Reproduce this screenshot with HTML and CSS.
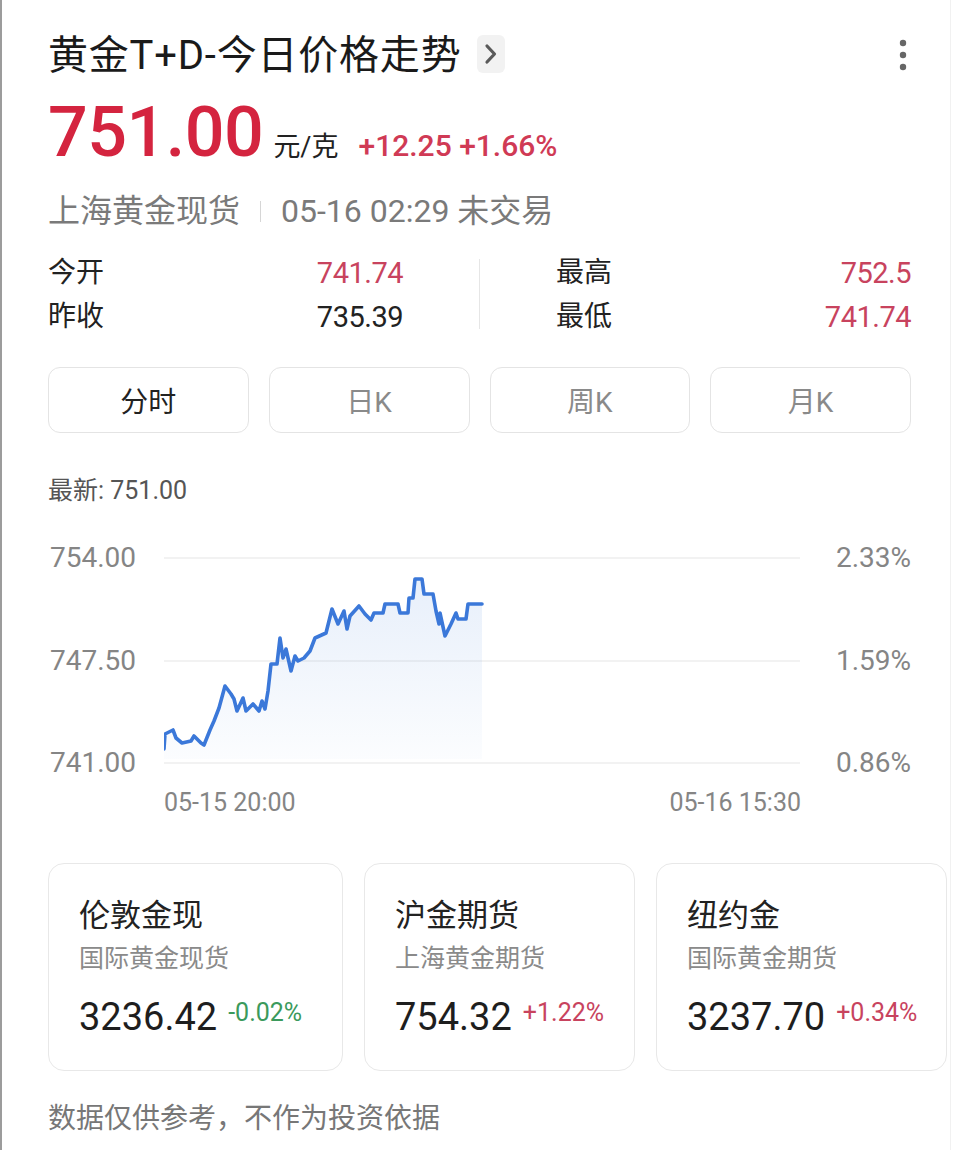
FILE: index.html
```html
<!DOCTYPE html>
<html lang="zh-CN">
<head>
<meta charset="utf-8">
<title>黄金T+D-今日价格走势</title>
<link rel="stylesheet" href="styles.css">
</head>
<body>
<div class="page">
  <header class="head">
    <div class="title-wrap">
      <h1 class="title">黄金T+D-今日价格走势</h1>
      <span class="title-arrow">
        <svg width="28" height="38" viewBox="0 0 28 38"><path d="M10 11 L17.5 19 L10 27" fill="none" stroke="#5a5a5a" stroke-width="3.2" stroke-linecap="round" stroke-linejoin="round"/></svg>
      </span>
    </div>
    <span class="more">
      <svg width="12" height="36" viewBox="0 0 12 36"><circle cx="6" cy="6" r="3.2" fill="#666"/><circle cx="6" cy="18" r="3.2" fill="#666"/><circle cx="6" cy="30" r="3.2" fill="#666"/></svg>
    </span>
  </header>

  <div class="price-row">
    <span class="price">751.00</span>
    <span class="unit">元/克</span>
    <span class="change">+12.25 +1.66%</span>
  </div>

  <div class="sub">
    <span>上海黄金现货</span>
    <span class="sub-sep"></span>
    <span>05-16 02:29 未交易</span>
  </div>

  <div class="stats">
    <div class="stat-col">
      <div class="stat-row"><span class="stat-label">今开</span><span class="stat-val red">741.74</span></div>
      <div class="stat-row"><span class="stat-label">昨收</span><span class="stat-val">735.39</span></div>
    </div>
    <div class="stat-divider"></div>
    <div class="stat-col">
      <div class="stat-row"><span class="stat-label">最高</span><span class="stat-val red">752.5</span></div>
      <div class="stat-row"><span class="stat-label">最低</span><span class="stat-val red">741.74</span></div>
    </div>
  </div>

  <div class="tabs">
    <div class="tab active">分时</div>
    <div class="tab">日K</div>
    <div class="tab">周K</div>
    <div class="tab">月K</div>
  </div>

  <div class="latest">最新: 751.00</div>

  <div class="chart">
    <div class="axis axis-left">
      <span>754.00</span><span>747.50</span><span>741.00</span>
    </div>
    <svg class="plot" width="636" height="235" viewBox="0 0 636 235">
      <defs>
        <linearGradient id="fillg" x1="0" y1="0" x2="0" y2="1">
          <stop offset="0" stop-color="#4a86dc" stop-opacity="0.13"/>
          <stop offset="1" stop-color="#4a86dc" stop-opacity="0.02"/>
        </linearGradient>
      </defs>
      <line x1="0" y1="15" x2="636" y2="15" stroke="#eeeeee" stroke-width="1.5"/>
      <line x1="0" y1="118" x2="636" y2="118" stroke="#eeeeee" stroke-width="1.5"/>
      <line x1="0" y1="220" x2="636" y2="220" stroke="#eeeeee" stroke-width="1.5"/>
      <polygon fill="url(#fillg)" points="0,206 1,191 9,187 12,195 18,200 27,198 30,193 37,200 40,202 46,187 50,178 55,165 61,143 67,151 70,156 73,168 79,155 82,168 89,161 95,168 98,158 101,166 104,148 107,121 113,121 116,95 119,115 122,106 127,128 131,113 134,118 140,115 146,108 151,95 162,90 168,66 174,81 180,68 183,86 186,73 195,63 201,71 207,77 210,70 219,70 221,61 234,61 236,70 244,70 245,55 249,55 251,36 258,36 260,51 269,51 272,68 275,81 276,70 281,93 287,81 292,70 294,76 302,76 304,61 315,61 318,61 318,216 0,216"/>
      <polyline fill="none" stroke="#3b78d9" stroke-width="3.6" stroke-linejoin="round" stroke-linecap="round" points="0,206 1,191 9,187 12,195 18,200 27,198 30,193 37,200 40,202 46,187 50,178 55,165 61,143 67,151 70,156 73,168 79,155 82,168 89,161 95,168 98,158 101,166 104,148 107,121 113,121 116,95 119,115 122,106 127,128 131,113 134,118 140,115 146,108 151,95 162,90 168,66 174,81 180,68 183,86 186,73 195,63 201,71 207,77 210,70 219,70 221,61 234,61 236,70 244,70 245,55 249,55 251,36 258,36 260,51 269,51 272,68 275,81 276,70 281,93 287,81 292,70 294,76 302,76 304,61 315,61 318,61"/>
    </svg>
    <div class="axis axis-right">
      <span>2.33%</span><span>1.59%</span><span>0.86%</span>
    </div>
  </div>

  <div class="xaxis">
    <span>05-15 20:00</span><span>05-16 15:30</span>
  </div>

  <div class="cards">
    <div class="card">
      <div class="card-title">伦敦金现</div>
      <div class="card-sub">国际黄金现货</div>
      <div class="card-price"><span class="card-num">3236.42</span><span class="card-chg green">-0.02%</span></div>
    </div>
    <div class="card">
      <div class="card-title">沪金期货</div>
      <div class="card-sub">上海黄金期货</div>
      <div class="card-price"><span class="card-num">754.32</span><span class="card-chg red">+1.22%</span></div>
    </div>
    <div class="card">
      <div class="card-title">纽约金</div>
      <div class="card-sub">国际黄金期货</div>
      <div class="card-price"><span class="card-num">3237.70</span><span class="card-chg red">+0.34%</span></div>
    </div>
  </div>

  <p class="note">数据仅供参考，不作为投资依据</p>
</div>
</body>
</html>
```

FILE: styles.css
```css
html, body {
  margin: 0;
  padding: 0;
  background: #ffffff;
}

body {
  font-family: "Roboto", "Noto Sans CJK SC", "Noto Sans", sans-serif;
  color: #222222;
}

.page {
  box-sizing: border-box;
  width: 951px;
  min-height: 1150px;
  padding: 36px 39px 0 46px;
  border-left: 2px solid #9c9c9c;
  border-right: 1px solid #f1f1f1;
}

.head {
  display: flex;
  align-items: center;
  justify-content: space-between;
  height: 40px;
}

.title-wrap {
  display: flex;
  align-items: center;
  gap: 16px;
}

.title {
  margin: 0;
  font-size: 40px;
  line-height: 40px;
  font-weight: 400;
  letter-spacing: 0.8px;
  color: #1a1a1a;
}

.title-arrow {
  display: flex;
  width: 28px;
  height: 38px;
  background: #f2f2f2;
  border-radius: 6px;
  margin-top: -4px;
}

.more {
  display: flex;
  margin-right: 2px;
  margin-top: -2px;
}

.price-row {
  display: flex;
  align-items: baseline;
  margin-top: 14px;
  line-height: 84px;
}

.price {
  font-size: 70px;
  font-weight: 500;
  color: #d4243f;
  letter-spacing: -0.5px;
}

.unit {
  font-size: 27px;
  color: #222222;
  margin-left: 10px;
}

.change {
  font-size: 30px;
  font-weight: 500;
  color: #d03a55;
  margin-left: 20px;
}

.sub {
  display: flex;
  align-items: center;
  margin-top: 2px;
  line-height: 40px;
  font-size: 32px;
  color: #7a7a7a;
}

.sub-sep {
  width: 1px;
  height: 21px;
  background: #d6d6d6;
  margin: 0 20px;
}

.stats {
  display: grid;
  grid-template-columns: 1fr 1px 1fr;
  column-gap: 76px;
  margin-top: 20px;
}

.stat-row {
  display: flex;
  justify-content: space-between;
  line-height: 44px;
}

.stat-label {
  font-size: 28px;
  color: #222222;
}

.stat-val {
  font-size: 29px;
  color: #222222;
  letter-spacing: -0.5px;
}

.stat-val.red {
  color: #c8435e;
}

.stat-divider {
  background: #e6e6e6;
  margin: 8px 0 10px;
}

.tabs {
  display: grid;
  grid-template-columns: repeat(4, 1fr);
  gap: 20px;
  margin-top: 28px;
}

.tab {
  box-sizing: border-box;
  height: 66px;
  border: 1px solid #e4e4e4;
  border-radius: 12px;
  display: flex;
  align-items: center;
  justify-content: center;
  font-size: 28px;
  color: #8a8a8a;
}

.tab.active {
  color: #222222;
}

.latest {
  margin-top: 44px;
  line-height: 28px;
  font-size: 25px;
  color: #555555;
}

.chart {
  display: flex;
  margin-top: 38px;
  height: 235px;
}

.axis {
  display: flex;
  flex-direction: column;
  justify-content: space-between;
  line-height: 30px;
  font-size: 28px;
  color: #858585;
}

.axis-left {
  width: 116px;
  padding-left: 2px;
  box-sizing: border-box;
}

.axis-right {
  width: 112px;
  align-items: flex-end;
}

.plot {
  display: block;
  flex: none;
}

.xaxis {
  display: flex;
  justify-content: space-between;
  margin: 10px 110px 0 116px;
  line-height: 30px;
  font-size: 25px;
  color: #858585;
}

.cards {
  display: grid;
  grid-template-columns: 295px 271px 291px;
  gap: 21px;
  margin-top: 45px;
  margin-right: -35px;
}

.card {
  box-sizing: border-box;
  height: 208px;
  border: 1px solid #e8e8e8;
  border-radius: 16px;
  padding: 35px 0 0 30px;
}

.card-title {
  font-size: 31px;
  line-height: 34px;
  color: #222222;
}

.card-sub {
  margin-top: 10px;
  font-size: 25px;
  line-height: 32px;
  color: #8a8a8a;
}

.card-price {
  display: flex;
  align-items: flex-start;
  margin-top: 20px;
  line-height: 44px;
}

.card-num {
  font-size: 38px;
  color: #1e1e1e;
}

.card-chg {
  font-size: 25px;
  line-height: 36px;
  margin-left: 11px;
}

.card-chg.green {
  color: #3b9a5c;
}

.card-chg.red {
  color: #c8435e;
}

.note {
  margin: 32px 0 0;
  line-height: 32px;
  font-size: 28px;
  color: #777777;
}
```
